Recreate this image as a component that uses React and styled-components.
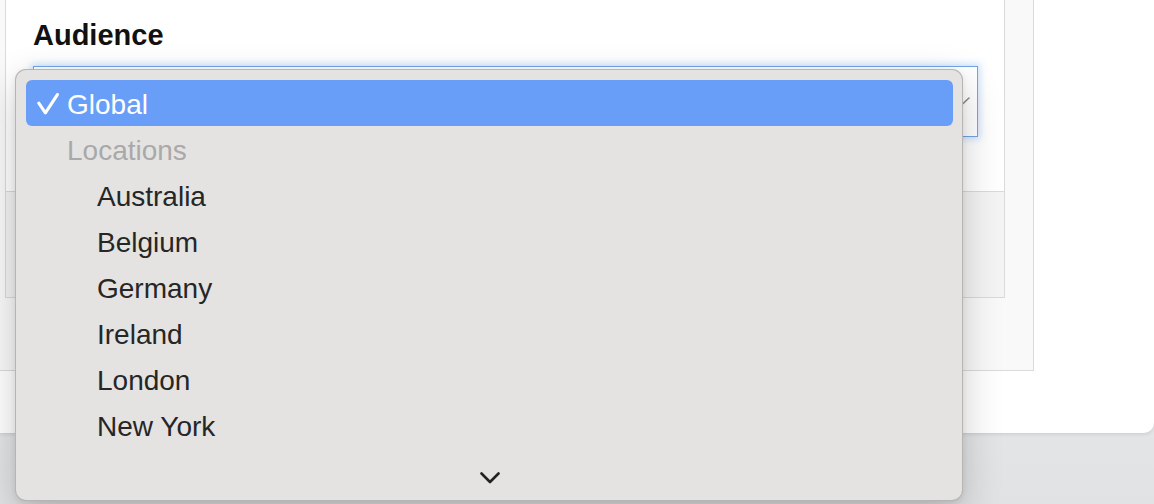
import React from "react";
import styled, { createGlobalStyle } from "styled-components";

const Global = createGlobalStyle`
  html, body { margin: 0; padding: 0; }
  body {
    width: 1154px;
    height: 504px;
    overflow: hidden;
    background: #ffffff;
    font-family: "Liberation Sans", Arial, Helvetica, sans-serif;
  }
  #root { position: relative; width: 1154px; height: 504px; }
`;

const Page = styled.div`
  position: relative;
  width: 1154px;
  height: 504px;
  display: flex;
  flex-direction: column;
  background: linear-gradient(180deg, #f2f3f5 0%, #e8e9eb 60%, #e1e2e4 100%);
`;

const Window = styled.div`
  height: 433px;
  background: #ffffff;
  border-bottom-right-radius: 10px;
  box-shadow: 0 1px 4px rgba(0, 0, 0, 0.12);
  overflow: hidden;
  flex: none;
`;

const OuterPanel = styled.div`
  box-sizing: border-box;
  width: 1034px;
  height: 371px;
  padding: 0 28px 0 5px;
  background: #f9f9f9;
  border-right: 1px solid #dadada;
  border-bottom: 1px solid #dadada;
`;

const Card = styled.div`
  box-sizing: border-box;
  width: 1000px;
  height: 298px;
  display: flex;
  flex-direction: column;
  border: 1px solid #dadada;
  border-top: none;
  background: #ffffff;
`;

const CardBody = styled.div`
  box-sizing: border-box;
  height: 192px;
  padding: 21px 0 0 27px;
  border-bottom: 1px solid #dadada;
  display: flex;
  flex-direction: column;
  gap: 17px;
`;

const Heading = styled.h2`
  margin: 0;
  font-size: 29px;
  line-height: 28px;
  font-weight: 700;
  color: #111111;
`;

const SelectBox = styled.div`
  box-sizing: border-box;
  width: 945px;
  height: 71px;
  border: 1px solid #72a5e8;
  background: #ffffff;
  box-shadow: 0 0 7px 2px rgba(110, 165, 240, 0.35);
  display: flex;
  align-items: center;
  justify-content: flex-end;
  padding-right: 7px;
`;

const CardFooter = styled.div`
  flex: 1;
  background: #f4f4f4;
`;

const Dock = styled.div`
  flex: 1;
`;

const Menu = styled.div`
  position: absolute;
  left: 15px;
  top: 69px;
  box-sizing: border-box;
  width: 948px;
  height: 432px;
  padding: 10px 9px 0 10px;
  background: #e4e3e2;
  border: 1px solid rgba(0, 0, 0, 0.2);
  border-radius: 11px;
  box-shadow: 0 14px 40px rgba(0, 0, 0, 0.2), 0 2px 6px rgba(0, 0, 0, 0.08);
  display: flex;
  flex-direction: column;
  font-size: 28px;
`;

const Row = styled.div`
  box-sizing: border-box;
  height: 46px;
  flex: none;
  display: flex;
  align-items: center;
  padding-top: 3px;
  border-radius: 6px;
  padding-left: ${(p) => p.$indent}px;
  color: ${(p) => p.$color};
  background: ${(p) => (p.$selected ? "#689ef8" : "transparent")};
  white-space: nowrap;
`;

const CheckSlot = styled.span`
  width: 30px;
  display: flex;
  align-items: center;
  margin-left: -30px;
  margin-top: -2px;
`;

const ScrollArrow = styled.div`
  flex: 1;
  display: flex;
  justify-content: center;
  align-items: flex-start;
  padding-top: 24px;
`;

const locations = ["Australia", "Belgium", "Germany", "Ireland", "London", "New York"];

export default function App() {
  return (
    <>
      <Global />
      <Page>
        <Window>
          <OuterPanel>
            <Card>
              <CardBody>
                <Heading>Audience</Heading>
                <SelectBox>
                  <svg width="16" height="9" viewBox="0 0 16 9" fill="none">
                    <path d="M1 1.5 L8 7.5 L15 1" stroke="#8a8a8a" strokeWidth="1.6" strokeLinecap="round" />
                  </svg>
                </SelectBox>
              </CardBody>
              <CardFooter />
            </Card>
          </OuterPanel>
        </Window>
        <Dock />
        <Menu>
          <Row $selected $indent={41} $color="#ffffff">
            <CheckSlot>
              <svg width="22" height="22" viewBox="0 0 22 22" fill="none">
                <path d="M1.8 10.2 L8.4 19.8 L20.4 1.6" stroke="#ffffff" strokeWidth="3.1" strokeLinecap="round" strokeLinejoin="round" />
              </svg>
            </CheckSlot>
            Global
          </Row>
          <Row $indent={41} $color="#a9a9a9">Locations</Row>
          {locations.map((l) => (
            <Row key={l} $indent={71} $color="#262626">
              {l}
            </Row>
          ))}
          <ScrollArrow>
            <svg width="20" height="12" viewBox="0 0 20 12" fill="none">
              <path d="M1.5 1.5 L10 10 L18.5 1.5" stroke="#222222" strokeWidth="2.6" strokeLinecap="round" strokeLinejoin="round" />
            </svg>
          </ScrollArrow>
        </Menu>
      </Page>
    </>
  );
}
